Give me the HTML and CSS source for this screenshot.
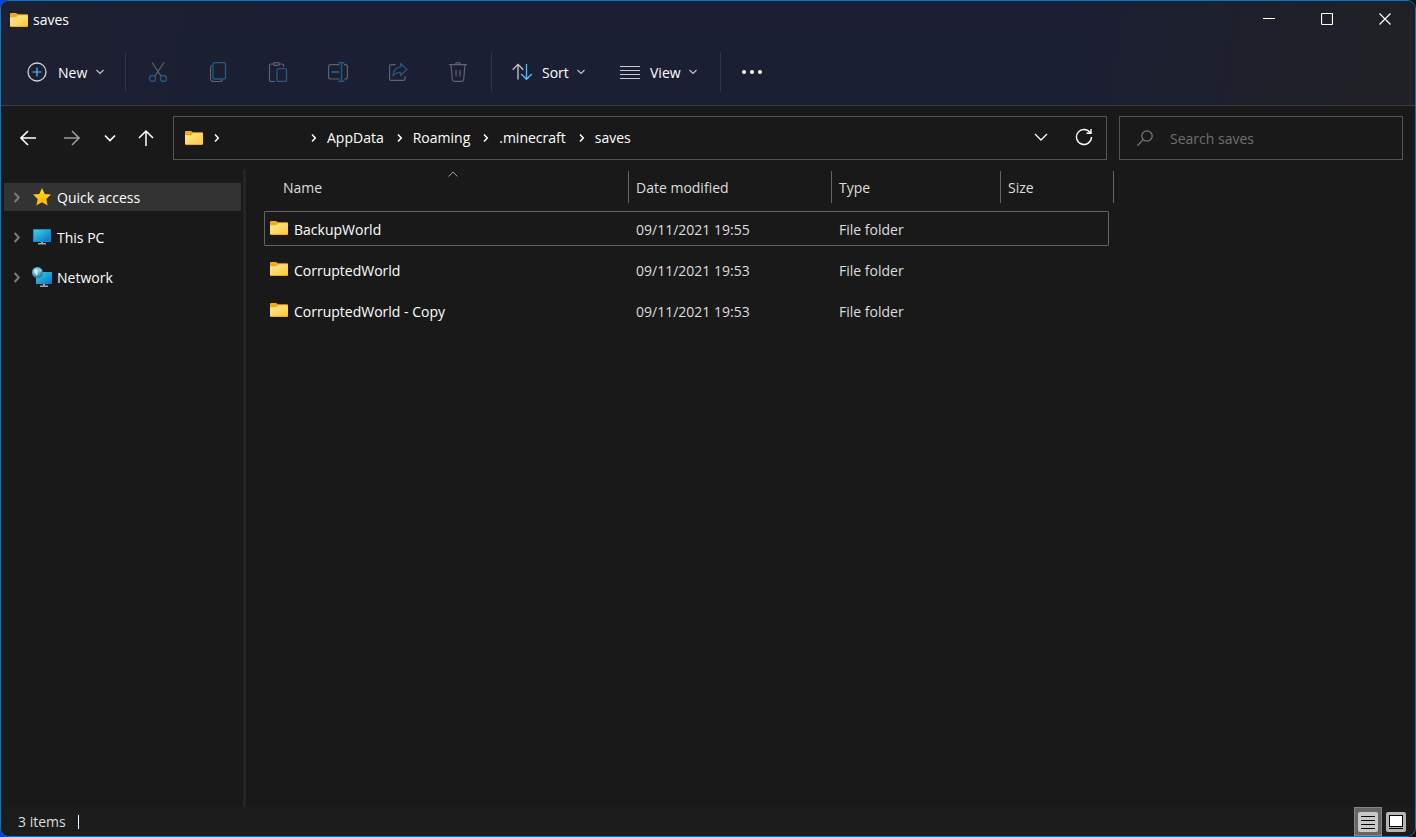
FILE: index.html
```html
<!DOCTYPE html>
<html lang="en">
<head>
  <title>saves</title>
  <meta charset="UTF-8">
  <meta name="viewport" content="width=device-width, initial-scale=1.0">
  <link rel="stylesheet" href="styles.css">
</head>
<body>

  <!-- shared icons -->
  <svg class="sprite" aria-hidden="true">
    <defs>
      <linearGradient id="folderFill" x1="0" y1="0" x2="1" y2="1">
        <stop offset="0" stop-color="#ffe9a0"/>
        <stop offset="1" stop-color="#ffc935"/>
      </linearGradient>
      <linearGradient id="screenFill" x1="0" y1="0" x2="1" y2="1">
        <stop offset="0" stop-color="#36d6e0"/>
        <stop offset="1" stop-color="#0f6fc6"/>
      </linearGradient>
      <linearGradient id="starFill" x1="0" y1="0" x2="0" y2="1">
        <stop offset="0" stop-color="#ffd91a"/>
        <stop offset="1" stop-color="#fdb409"/>
      </linearGradient>
      <radialGradient id="globeFill" cx="0.4" cy="0.35" r="0.65">
        <stop offset="0" stop-color="#d5f1fb"/>
        <stop offset="0.5" stop-color="#62b5d8"/>
        <stop offset="1" stop-color="#246f9c"/>
      </radialGradient>
    </defs>
    <symbol id="folder" viewBox="0 0 18 14">
      <path d="M0 1Q0 0 1 0H6L8 1.300H17Q18 1.300 18 2.300V13Q18 14 17 14H1Q0 14 0 13Z" fill="#f5ac12"/>
      <path d="M0 4.200H6.200L8.200 2.300H18V13H0Z" fill="url(#folderFill)"/>
    </symbol>
    <symbol id="down" viewBox="0 0 10 6">
      <path d="M1.500 1L5 4.500L8.500 1" fill="none" stroke="currentColor" stroke-width="1.200"/>
    </symbol>
    <symbol id="right" viewBox="0 0 7 10">
      <path d="M2 1.500L5.300 5L2 8.500" fill="none" stroke="currentColor" stroke-width="1.500"/>
    </symbol>
  </svg>

  <div class="window">
    <header class="top">
      <div class="titlebar">
        <svg class="folder"><use href="#folder"/></svg>
        <span class="title">saves</span>
        <div class="controls">
          <button type="button" aria-label="Minimize">
            <svg width="12" height="12"><path d="M0 5.500H12" stroke="#fff"/></svg>
          </button>
          <button type="button" aria-label="Maximize">
            <svg width="12" height="12"><rect x="0.500" y="0.500" width="11" height="11" rx="1" fill="none" stroke="#fff" stroke-width="1.200"/></svg>
          </button>
          <button type="button" aria-label="Close">
            <svg width="12" height="12"><path d="M0.500 0.500L11.500 11.500M11.500 0.500L0.500 11.500" stroke="#fff" stroke-width="1.200"/></svg>
          </button>
        </div>
      </div>

      <div class="toolbar">
        <button type="button" class="tool new">
          <svg width="20" height="20" fill="none">
            <circle cx="10" cy="10" r="9" stroke="#d0d2d8" stroke-width="1.300"/>
            <path d="M10 5.500V14.500M5.500 10H14.500" stroke="#4cc2ff" stroke-width="1.200"/>
          </svg>
          <span>New</span>
          <svg class="caret"><use href="#down"/></svg>
        </button>
        <span class="sep"></span>
        <div class="icons">
          <button type="button" aria-label="Cut" disabled>
            <svg width="20" height="20" fill="none">
              <path d="M4 0.500L13 14M16 0.500L7 14" stroke="#60626e" stroke-width="1.200"/>
              <circle cx="4.500" cy="16.500" r="3" stroke="#28587d" stroke-width="1.300"/>
              <circle cx="15.500" cy="16.500" r="3" stroke="#28587d" stroke-width="1.300"/>
            </svg>
          </button>
          <button type="button" aria-label="Copy" disabled>
            <svg width="20" height="20" fill="none">
              <path d="M4 3.500Q2.500 4 2.500 6V16Q2.500 19.500 6 19.500H12Q14 19.500 14.500 18.300" stroke="#60626e" stroke-width="1.200"/>
              <rect x="5" y="0.600" width="12.500" height="16.400" rx="2" stroke="#28587d" stroke-width="1.300"/>
            </svg>
          </button>
          <button type="button" aria-label="Paste" disabled>
            <svg width="20" height="20" fill="none">
              <path d="M7 19.500H3Q1.500 19.500 1.500 18V3.500Q1.500 2 3 2H5.500M11.500 2H14Q15.500 2 15.500 3.500V5" stroke="#60626e" stroke-width="1.200"/>
              <rect x="5.500" y="0.600" width="6" height="2.800" rx="1.400" stroke="#60626e" stroke-width="1.200"/>
              <rect x="9" y="6.600" width="9.500" height="12.800" rx="1.500" stroke="#28587d" stroke-width="1.300"/>
            </svg>
          </button>
          <button type="button" aria-label="Rename" disabled>
            <svg width="20" height="20" fill="none">
              <path d="M11.500 2.600H2.500Q0.600 2.600 0.600 4.500V15Q0.600 17 2.500 17H11.500M16 2.600H17.500Q19.400 2.600 19.400 4.500V15Q19.400 17 17.500 17H16" stroke="#60626e" stroke-width="1.200"/>
              <path d="M10.500 0.700H16.500M10.500 19.300H16.500M13.500 0.700V19.300" stroke="#28587d" stroke-width="1.400"/>
              <path d="M3.500 10H11" stroke="#28587d" stroke-width="2"/>
            </svg>
          </button>
          <button type="button" aria-label="Share" disabled>
            <svg width="20" height="20" fill="none">
              <path d="M7.500 2.600H3Q1.600 2.600 1.600 4V17Q1.600 18.400 3 18.400H15.500Q17 18.400 17 17V14" stroke="#60626e" stroke-width="1.200"/>
              <path d="M12.500 1.500L19 7.500L12.500 13.500V10.300Q7.500 10.300 5 14Q5.500 5.500 12.500 4.800Z" stroke="#28587d" stroke-width="1.300" stroke-linejoin="round"/>
            </svg>
          </button>
          <button type="button" aria-label="Delete" disabled>
            <svg width="20" height="20" fill="none" stroke="#60626e" stroke-width="1.200">
              <path d="M1 2.600H19M3 2.600L4.300 17.500Q4.500 19.400 6.300 19.400H13.700Q15.500 19.400 15.700 17.500L17 2.600M7.500 2.500Q7.500 0.600 10 0.600Q12.500 0.600 12.500 2.500M8 8V14.500M12 8V14.500"/>
            </svg>
          </button>
        </div>
        <span class="sep"></span>
        <div class="menus">
          <button type="button" class="tool">
            <svg width="20" height="20" fill="none" stroke-width="1.300">
              <path d="M6 17.500V2.500M0.700 7.700L6 2.400L11.300 7.700" stroke="#c8cad0"/>
              <path d="M14.500 2V17M9.200 12L14.500 17.300L19.800 12" stroke="#4cc2ff"/>
            </svg>
            <span>Sort</span>
            <svg class="caret"><use href="#down"/></svg>
          </button>
          <button type="button" class="tool">
            <svg width="20" height="20"><path d="M0 4.500H20M0 8.500H20M0 12.500H20M0 16.500H20" stroke="#c8cad0"/></svg>
            <span>View</span>
            <svg class="caret"><use href="#down"/></svg>
          </button>
        </div>
        <span class="sep"></span>
        <button type="button" class="more" aria-label="See more">
          <svg width="22" height="6" fill="#fff"><circle cx="3" cy="3" r="2"/><circle cx="11" cy="3" r="2"/><circle cx="19" cy="3" r="2"/></svg>
        </button>
      </div>
    </header>

    <nav class="navbar">
      <div class="history">
        <button type="button" class="wide" aria-label="Back">
          <svg width="16" height="16" fill="none" stroke="#fff" stroke-width="1.600"><path d="M16 8H1M8 1L1 8L8 15"/></svg>
        </button>
        <button type="button" class="wide" aria-label="Forward">
          <svg width="16" height="16" fill="none" stroke="#9a9a9a" stroke-width="1.600"><path d="M0 8H15M8 1L15 8L8 15"/></svg>
        </button>
        <button type="button" class="narrow" aria-label="Recent locations">
          <svg width="12" height="8" fill="none" stroke="#fff" stroke-width="1.600"><path d="M1 1.500L6 6.500L11 1.500"/></svg>
        </button>
        <button type="button" class="mid" aria-label="Up">
          <svg width="16" height="16" fill="none" stroke="#fff" stroke-width="1.500"><path d="M8 16V1M1 8L8 1L15 8"/></svg>
        </button>
      </div>

      <div class="address">
        <div class="crumbs">
          <svg class="folder"><use href="#folder"/></svg>
          <svg class="arrow"><use href="#right"/></svg>
          <span class="user"></span>
          <svg class="arrow"><use href="#right"/></svg>
          <a href="#">AppData</a>
          <svg class="arrow"><use href="#right"/></svg>
          <a href="#">Roaming</a>
          <svg class="arrow"><use href="#right"/></svg>
          <a href="#">.minecraft</a>
          <svg class="arrow"><use href="#right"/></svg>
          <a href="#">saves</a>
        </div>
        <button type="button" aria-label="Previous locations">
          <svg width="14" height="8" fill="none" stroke="#fff" stroke-width="1.300"><path d="M1 1L7 7L13 1"/></svg>
        </button>
        <button type="button" aria-label="Refresh">
          <svg width="18" height="18" fill="none" stroke="#fff" stroke-width="1.400"><path d="M15.500 5.200A7.500 7.500 0 1 0 16.500 9M16 1V5.300H11.500"/></svg>
        </button>
      </div>

      <label class="search">
        <svg width="16" height="16" fill="none" stroke="#7d7d7d" stroke-width="1.200"><circle cx="10" cy="6" r="5.200"/><path d="M6.300 9.700L0.500 15.500"/></svg>
        <input type="text" placeholder="Search saves" aria-label="Search saves">
      </label>
    </nav>

    <div class="main">
      <aside class="sidebar">
        <a href="#" class="place active">
          <svg class="arrow"><use href="#right"/></svg>
          <svg width="20" height="20"><path d="M10 1L12.700 6.900L19 7.600L14.300 12L15.600 18.500L10 15.300L4.400 18.500L5.700 12L1 7.600L7.300 6.900Z" fill="url(#starFill)"/></svg>
          <span>Quick access</span>
        </a>
        <a href="#" class="place">
          <svg class="arrow"><use href="#right"/></svg>
          <svg width="20" height="20"><rect x="1" y="2" width="18" height="13" fill="#1789c8"/><rect x="2" y="3" width="16" height="11" fill="url(#screenFill)"/><path d="M9 15H11V16H14V17.500H6V16H9Z" fill="#9aa7b0"/></svg>
          <span>This PC</span>
        </a>
        <a href="#" class="place">
          <svg class="arrow"><use href="#right"/></svg>
          <svg width="20" height="20"><rect x="4" y="5" width="16" height="12" fill="url(#screenFill)"/><path d="M11 17H13V18.500H16V20H8V18.500H11Z" fill="#9aa7b0"/><circle cx="5.500" cy="5.500" r="5.500" fill="url(#globeFill)"/><path d="M2 3Q5 3 5 5.500Q6.500 7 4.500 8.500Q2.500 7 2 3M7 1.500L9.500 3.500L8 5Z" fill="#f0fbff" opacity="0.700"/></svg>
          <span>Network</span>
        </a>
      </aside>

      <section class="content">
        <svg class="sorted" width="10" height="6" fill="none" stroke="#a0a0a0"><path d="M0.500 5.500L5 1L9.500 5.500"/></svg>
        <table class="files">
          <thead>
            <tr>
              <th class="name"><button type="button">Name</button></th>
              <th class="date"><button type="button">Date modified</button></th>
              <th class="type"><button type="button">Type</button></th>
              <th class="size"><button type="button">Size</button></th>
            </tr>
          </thead>
          <tbody>
            <tr class="focused">
              <td><div class="file"><svg class="folder"><use href="#folder"/></svg>BackupWorld</div></td>
              <td>09/11/2021 19:55</td>
              <td>File folder</td>
              <td></td>
            </tr>
            <tr>
              <td><div class="file"><svg class="folder"><use href="#folder"/></svg>CorruptedWorld</div></td>
              <td>09/11/2021 19:53</td>
              <td>File folder</td>
              <td></td>
            </tr>
            <tr>
              <td><div class="file"><svg class="folder"><use href="#folder"/></svg>CorruptedWorld - Copy</div></td>
              <td>09/11/2021 19:53</td>
              <td>File folder</td>
              <td></td>
            </tr>
          </tbody>
        </table>
      </section>
    </div>

    <footer class="status">
      <span class="count">3 items</span>
      <div class="views">
        <button type="button" class="on" aria-label="Details">
          <svg width="20" height="20"><rect width="20" height="20" rx="2" fill="#c8c8c8"/><path d="M3 4.500H17M3 8.500H17M3 12.500H17M3 16.500H17" stroke="#000"/></svg>
        </button>
        <button type="button" aria-label="Large icons">
          <svg width="20" height="20"><rect width="20" height="20" rx="2" fill="#b4b4b4"/><rect x="3.500" y="3.500" width="13" height="11" fill="#fff" stroke="#000"/><path d="M3 16.500H17" stroke="#000"/></svg>
        </button>
      </div>
    </footer>
  </div>

</body>
</html>
```

FILE: styles.css
```css
* {
  box-sizing: border-box;
}

body {
  margin: 0;
  font-family: "Open Sans", sans-serif;
  font-size: 14px;
  line-height: 20px;
  color: #fff;
  background: linear-gradient(90deg, #0a3ad8, #0a1020);
}

button {
  display: flex;
  align-items: center;
  justify-content: center;
  padding: 0;
  border: none;
  background: none;
  font: inherit;
  color: inherit;
}

a {
  color: inherit;
  text-decoration: none;
}

svg {
  display: block;
  flex: none;
}

.sprite {
  position: absolute;
  width: 0;
  height: 0;
}

.folder {
  width: 18px;
  height: 14px;
}

.arrow {
  width: 7px;
  height: 10px;
}

.window {
  display: flex;
  flex-direction: column;
  height: 100vh;
  border: 1px solid #0078d4;
  border-radius: 9px;
  background: #191919;
  overflow: hidden;
}

/* title bar and toolbar */
.top {
  border-bottom: 1px solid #3b3b3b;
  background: linear-gradient(100deg, #1c2030 0%, #1b1f33 20%, #1b1f33 75%, #1f2127 95%);
}

.titlebar {
  display: flex;
  align-items: center;
  height: 38px;
  padding: 0 1px 0 9px;
}

.title {
  margin-left: 5px;
}

.controls {
  display: flex;
  align-self: flex-start;
  margin-left: auto;
}

.controls button {
  width: 58px;
  height: 36px;
}

.toolbar {
  display: flex;
  align-items: center;
  gap: 10px;
  height: 66px;
  padding-left: 15px;
}

.sep {
  width: 1px;
  height: 40px;
  margin-left: 1px;
  background: #30344a;
}

.tool {
  justify-content: flex-start;
  gap: 10px;
  width: 94px;
  height: 40px;
  padding-left: 10px;
}

.tool span {
  padding-top: 2px;
}

.tool.new {
  gap: 11px;
  width: 98px;
  padding-left: 11px;
}

.caret {
  width: 10px;
  height: 6px;
  margin-left: -3px;
  color: #c0c2c8;
}

.icons {
  display: flex;
  gap: 16px;
}

.icons button {
  width: 44px;
  height: 40px;
}

.menus {
  display: flex;
  gap: 14px;
}

.menus .tool:last-child {
  width: 99px;
}

.more {
  width: 42px;
  height: 40px;
}

/* address row */
.navbar {
  display: flex;
  padding: 10px 12px 10px 5px;
}

.history {
  display: flex;
  align-items: center;
  margin-right: 7px;
}

.history button {
  height: 40px;
}

.history .wide {
  width: 44px;
}

.history .narrow {
  width: 32px;
}

.history .mid {
  width: 40px;
}

.address {
  display: flex;
  flex: 1;
  align-items: center;
  height: 44px;
  padding-right: 1px;
  border: 1px solid #535353;
}

.address button {
  width: 43px;
  height: 40px;
  margin-bottom: 2px;
}

.crumbs {
  display: flex;
  flex: 1;
  align-items: center;
  gap: 10px;
  padding-left: 11px;
}

.crumbs a {
  padding-right: 2px;
}

.user {
  width: 70px;
}

.search {
  display: flex;
  align-items: center;
  gap: 17px;
  width: 284px;
  height: 44px;
  margin-left: 12px;
  padding: 0 17px;
  border: 1px solid #535353;
}

.search input {
  flex: 1;
  min-width: 0;
  padding: 2px 0 0;
  border: none;
  outline: none;
  background: none;
  font: inherit;
  color: #fff;
}

.search input::placeholder {
  color: #6f6f6f;
  opacity: 1;
}

/* folder tree and file list */
.main {
  display: flex;
  flex: 1;
  min-height: 0;
}

.sidebar {
  width: 245px;
  padding: 13px 2px 0 3px;
  border-right: 3px solid #252525;
}

.place {
  display: flex;
  align-items: center;
  height: 28px;
  margin-bottom: 12px;
  padding-left: 8px;
}

.place.active {
  background: #333;
}

.place .arrow {
  width: 9px;
  height: 13px;
  margin-right: 11px;
  color: #7d7d7d;
}

.place span {
  margin-left: 5px;
  padding-top: 2px;
}

.content {
  position: relative;
  flex: 1;
  padding-left: 18px;
}

.sorted {
  position: absolute;
  top: 1px;
  left: 202px;
}

.files {
  table-layout: fixed;
  width: 845px;
  border-collapse: collapse;
}

.files th {
  height: 38px;
  padding: 1px 0 0;
  font-weight: normal;
  vertical-align: top;
}

.files th button {
  justify-content: flex-start;
  width: 100%;
  height: 32px;
  padding: 2px 0 0 7px;
  border-left: 1px solid #636363;
  color: #dedede;
}

.files .name {
  width: 364px;
}

.files .name button {
  padding-left: 19px;
  border-left: none;
}

.files .date {
  width: 203px;
}

.files .type {
  width: 169px;
}

/* the last divider stands just outside the rows */
.files .size button {
  width: 114px;
  border-right: 1px solid #636363;
}

.files td {
  height: 41px;
  padding: 2px 8px 0;
  color: #dedede;
}

.files td:first-child {
  padding: 2px 6px 0;
  color: #fff;
}

.file {
  display: flex;
  align-items: center;
  gap: 6px;
}

.file .folder {
  margin-bottom: 4px;
}

.focused {
  position: relative;
}

.focused::after {
  content: "";
  position: absolute;
  inset: 3px 0;
  border: 1px solid #636363;
  border-radius: 1px;
}

.status {
  display: flex;
  align-items: center;
  height: 29px;
  padding: 0 5px 0 17px;
  background: #1c1c1c;
}

.count {
  padding-right: 12px;
  border-right: 1px solid #fff;
  line-height: 14px;
  color: #dedede;
}

.views {
  display: flex;
  margin-left: auto;
}

.views button {
  width: 28px;
  height: 29px;
}

.views .on {
  border: 1px solid #858585;
  background: #666;
}
```
